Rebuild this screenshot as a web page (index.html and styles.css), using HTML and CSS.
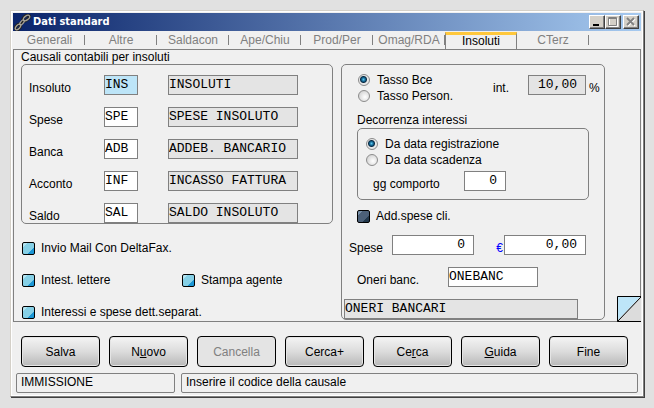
FILE: index.html
```
<!DOCTYPE html>
<html lang="it">
<head>
    <meta charset="UTF-8">
    <meta name="viewport" content="width=device-width, initial-scale=1.0">
    <title>Dati standard</title>
    <link rel="stylesheet" href="styles.css">
</head>
<body>

    <form class="window" onsubmit="return false">
        <header class="titlebar">
            <svg class="chain" width="17" height="17" viewBox="0 0 17 17" fill="none">
                <g stroke="#222" stroke-width="3">
                    <ellipse cx="4" cy="13" rx="3" ry="2" transform="rotate(-48 4 13)"/>
                    <ellipse cx="12" cy="4" rx="4" ry="2" transform="rotate(-40 12 4)"/>
                    <path d="M5 11l6-5"/>
                </g>
                <g stroke="#a5a298" stroke-width="1.3">
                    <ellipse cx="4" cy="13" rx="3.4" ry="1.8" transform="rotate(-48 4 13)"/>
                    <ellipse cx="8" cy="8.5" rx="3" ry="1.4" transform="rotate(-50 8 8.5)"/>
                    <ellipse cx="12.5" cy="4" rx="3.6" ry="2" transform="rotate(-35 12.5 4)"/>
                </g>
            </svg>
            <h1>Dati standard</h1>
            <div class="controls">
                <button type="button" aria-label="Riduci">
                    <svg width="12" height="10" viewBox="0 0 12 10"><path d="M2 7h6v2H2z" fill="#000"/></svg>
                </button>
                <button type="button" aria-label="Ingrandisci" disabled>
                    <svg width="12" height="10" viewBox="0 0 12 10"><path d="M2.500 1.500h8v8h-8z" fill="none" stroke="#fff"/><path d="M1.500 .5h8v8h-8zM1 1.500h9" fill="none" stroke="#808080"/></svg>
                </button>
                <button type="button" aria-label="Chiudi" class="close">
                    <svg width="12" height="10" viewBox="0 0 12 10"><path d="M3 2l7 7M10 2L3 9" stroke="#fff" stroke-width="1.500"/><path d="M2 1l7 7M9 1L2 8" stroke="#808080" stroke-width="1.800"/></svg>
                </button>
            </div>
        </header>

        <nav class="tabs">
            <button type="button">Generali</button>
            <button type="button">Altre</button>
            <button type="button">Saldacon</button>
            <button type="button">Ape/Chiu</button>
            <button type="button">Prod/Per</button>
            <button type="button">Omag/RDA</button>
            <button type="button" class="active">Insoluti</button>
            <button type="button">CTerz</button>
        </nav>

        <main class="pane">
            <section class="left">
                <fieldset>
                    <legend>Causali contabili per insoluti</legend>
                    <div class="box accounts">
                        <div class="row">
                            <label for="insoluto">Insoluto</label>
                            <input id="insoluto" class="code current" value="INS">
                            <input class="desc" value="INSOLUTI" aria-label="Descrizione insoluto" readonly>
                        </div>
                        <div class="row">
                            <label for="spese">Spese</label>
                            <input id="spese" class="code" value="SPE">
                            <input class="desc" value="SPESE INSOLUTO" aria-label="Descrizione spese" readonly>
                        </div>
                        <div class="row">
                            <label for="banca">Banca</label>
                            <input id="banca" class="code" value="ADB">
                            <input class="desc" value="ADDEB. BANCARIO" aria-label="Descrizione banca" readonly>
                        </div>
                        <div class="row">
                            <label for="acconto">Acconto</label>
                            <input id="acconto" class="code" value="INF">
                            <input class="desc" value="INCASSO FATTURA" aria-label="Descrizione acconto" readonly>
                        </div>
                        <div class="row">
                            <label for="saldo">Saldo</label>
                            <input id="saldo" class="code" value="SAL">
                            <input class="desc" value="SALDO INSOLUTO" aria-label="Descrizione saldo" readonly>
                        </div>
                    </div>
                </fieldset>

                <div class="options">
                    <label class="wide"><input type="checkbox"> Invio Mail Con DeltaFax.</label>
                    <label><input type="checkbox"> Intest. lettere</label>
                    <label><input type="checkbox"> Stampa agente</label>
                    <label class="wide"><input type="checkbox"> Interessi e spese dett.separat.</label>
                </div>
            </section>

            <section class="box rates">
                <div class="rate">
                    <div class="radios">
                        <label><input type="radio" name="tasso" checked> Tasso Bce</label>
                        <label><input type="radio" name="tasso"> Tasso Person.</label>
                    </div>
                    <label class="int" for="int">int.</label>
                    <input id="int" class="num percent" value="10,00" readonly>
                    <span class="unit">%</span>
                </div>

                <fieldset class="start">
                    <legend>Decorrenza interessi</legend>
                    <div class="box">
                        <div class="radios">
                            <label><input type="radio" name="decorrenza" checked> Da data registrazione</label>
                            <label><input type="radio" name="decorrenza"> Da data scadenza</label>
                        </div>
                        <div class="days">
                            <label for="comporto">gg comporto</label>
                            <input id="comporto" class="num" value="0">
                        </div>
                    </div>
                </fieldset>

                <label class="client"><input type="checkbox" checked> Add.spese cli.</label>

                <div class="costs">
                    <label for="importo">Spese</label>
                    <input id="importo" class="num" value="0">
                    <label class="euro" for="euro">€</label>
                    <input id="euro" class="num" value="0,00">
                </div>

                <div class="bank">
                    <label for="oneri">Oneri banc.</label>
                    <input id="oneri" value="ONEBANC">
                </div>
                <input class="bank-desc" value="ONERI BANCARI" aria-label="Descrizione oneri" readonly>
            </section>

            <svg class="fold" width="24" height="26" viewBox="0 0 24 26">
                <path d="M0 0h24v26H0z" fill="#dcdcdc"/>
                <path d="M0 0h24L0 25z" fill="#bde5f8"/>
                <path d="M24 .5H.5v25H24M.5 25.500L24 1" fill="none" stroke="#000"/>
            </svg>
        </main>

        <div class="actions">
            <button type="button">Salva</button>
            <button type="button">N<u>u</u>ovo</button>
            <button type="button" disabled>Cancella</button>
            <button type="button">Cerca+</button>
            <button type="button">Ce<u>r</u>ca</button>
            <button type="button"><u>G</u>uida</button>
            <button type="button">Fine</button>
        </div>

        <footer class="status">
            <span class="mode">IMMISSIONE</span>
            <span class="hint">Inserire il codice della causale</span>
        </footer>
    </form>

</body>
</html>
```
FILE: styles.css
```
* {
    box-sizing: border-box;
}
body {
    margin: 0;
    padding: 10px;
    background: #e1e1e1;
    font: 12px/16px "Liberation Sans", Arial, sans-serif;
    color: #000;
}
button, input {
    font: inherit;
    color: inherit;
    margin: 0;
}
fieldset {
    border: 0;
    margin: 0;
    padding: 0;
    min-width: 0;
}
legend {
    padding: 0;
}

/* window frame */
.window {
    background: #f0f0f0;
    border: 1px solid #d4d0c8;
    border-right-color: #808080;
    border-bottom-color: #808080;
    outline: 1px solid #fff;
    outline-offset: -2px;
    padding: 2px;
    box-shadow: 1px 1px 0 #404040;
}
.titlebar {
    display: flex;
    align-items: center;
    height: 18px;
    padding: 0 2px 0 1px;
    background: linear-gradient(to right, #0a246a, #a6caf0);
}
.titlebar h1 {
    flex: 1;
    margin: 0 0 0 2px;
    font: bold 11px/18px "DejaVu Sans Condensed", Tahoma, sans-serif;
    color: #fff;
}
.controls {
    display: flex;
}
.controls button {
    display: flex;
    width: 16px;
    height: 14px;
    padding: 1px;
    background: #d4d0c8;
    border: 1px solid;
    border-color: #fff #404040 #404040 #fff;
    box-shadow: inset -1px -1px 0 #808080;
}
.controls .close {
    margin-left: 2px;
}

/* tabs */
.tabs {
    display: flex;
    padding: 1px 0 0 1px;
    height: 18px;
}
.tabs button {
    flex: 0 1 72px;
    padding: 0;
    border: 0;
    background: linear-gradient(#808080, #808080) right 3px / 1px 10px no-repeat;
    color: #808080;
    line-height: 17px;
    white-space: nowrap;
}
.tabs button:first-child {
    flex-basis: 71px;
}
.tabs .active {
    position: relative;
    height: 18px;
    padding-bottom: 3px;
    border: 1px solid #808080;
    border-top: 3px solid #ffc83c;
    border-bottom: 0;
    background: #f0f0f0;
    color: #000;
    line-height: 12px;
}

/* pane */
.pane {
    position: relative;
    display: grid;
    grid-template-columns: minmax(0, 312fr) minmax(0, 264fr);
    gap: 8px;
    padding: 0 35px 1px 7px;
    border: 1px solid #808080;
}
.box {
    border: 1px solid #808080;
    border-radius: 5px;
}
.row, .rate, .days, .costs, .bank {
    display: flex;
}
.pane input:not([type]) {
    height: 20px;
    min-width: 0;
    padding: 0 0 2px;
    border: 1px solid #808080;
    border-radius: 0;
    background: #fff;
    font: 13px/16px "Liberation Mono", "Courier New", monospace;
}
.pane input[readonly] {
    background: #e4e4e4;
}
.pane input.current {
    background: #bde5f8;
}
.pane input.num {
    padding-right: 8px;
    text-align: right;
}
.left legend {
    line-height: 14px;
}
.accounts {
    display: grid;
    grid-template-columns: minmax(0, 1fr);
    gap: 12px;
    padding: 10px 34px 0 7px;
}
.row label, .rate .int, .days label, .costs label, .bank label {
    padding-top: 6px;
    line-height: 14px;
}
.row label {
    flex: 0 0 75px;
}
.row .code {
    flex: 0 0 34px;
    width: 34px;
    margin-right: 30px;
}
.row .desc {
    flex: 1;
}

/* tick boxes and radios */
input[type="checkbox"] {
    appearance: none;
    width: 13px;
    height: 13px;
    margin-right: 6px;
    border: 1px solid #000;
    border-radius: 2px;
    background: linear-gradient(135deg, #b4e4f0 0 20%, #86d0e6 20% 68%, #1c96d4 72%);
}
input[type="checkbox"]:checked {
    background: linear-gradient(135deg, #7890a8 0 20%, #4c6078 20% 68%, #22384c 72%);
}
input[type="radio"] {
    appearance: none;
    width: 12px;
    height: 12px;
    margin-right: 7px;
    border: 1px solid #8c8c8c;
    border-radius: 50%;
    background: radial-gradient(circle at 60% 60%, #fff, #c8c8c8);
}
input[type="radio"]:checked {
    background: radial-gradient(circle at 45% 45%, #5cc8f0, #10608c 2px, #0c2c44 3px, #e8e8e8 4px);
}
.options {
    display: grid;
    grid-template-columns: 160px 1fr;
    row-gap: 16px;
    padding: 16px 0 0 1px;
}
.options .wide {
    grid-column: span 2;
}
.options label, .client, .radios label {
    display: flex;
    align-items: center;
    height: 16px;
    white-space: nowrap;
}

/* right column */
.rates {
    display: flex;
    flex-direction: column;
    margin-top: 14px;
    padding: 7px 15px 0;
}
.radios {
    flex: 1;
    padding-left: 1px;
}
.rate .int {
    padding-top: 9px;
}
.rate .percent {
    width: 58px;
    margin: 3px 3px 0 19px;
}
.rate .unit {
    width: 0;
    padding-top: 8px;
}
.start {
    margin-top: 8px;
}
.start .box {
    height: 72px;
    padding: 7px 8px 0;
}
.start .radios {
    padding-left: 0;
}
.days {
    padding: 3px 0 0 7px;
}
.days label {
    flex: 0 0 91px;
}
.days input {
    width: 42px;
}
.client {
    margin-top: 8px;
}
.rate .percent, .days input {
    flex-shrink: 0;
}
.costs {
    margin: 11px 3px 0 -8px;
}
.costs label {
    width: 43px;
}
.costs input {
    flex: 1;
    width: 0;
}
.costs .euro {
    width: 30px;
    padding-right: 1px;
    color: #00f;
    text-align: right;
}
.bank {
    margin-top: 12px;
}
.bank label {
    width: 91px;
}
.bank input {
    width: 90px;
}
.rates .bank-desc {
    margin: 12px 11px 0 -13px;
}
.fold {
    position: absolute;
    right: -1px;
    bottom: -1px;
}

/* buttons and status bar */
.actions {
    display: flex;
    gap: 9px;
    padding: 14px 13px 6px 8px;
}
.actions button {
    flex: 1;
    height: 31px;
    padding: 0;
    border: 1px solid #000;
    border-radius: 4px;
    background: linear-gradient(#f4f4f4, #dcdcdc 50%, #b8b8b8);
    box-shadow: inset 0 0 0 1px #e4e4e4;
}
.actions button:disabled {
    background: #e4e4e4;
    color: #808080;
}
.status {
    display: flex;
    gap: 6px;
    padding: 0 3px 1px;
}
.status span {
    height: 20px;
    padding: 0 4px;
    border: 1px solid #808080;
    border-radius: 2px;
}
.status .mode {
    width: 159px;
}
.status .hint {
    flex: 1;
}
```
